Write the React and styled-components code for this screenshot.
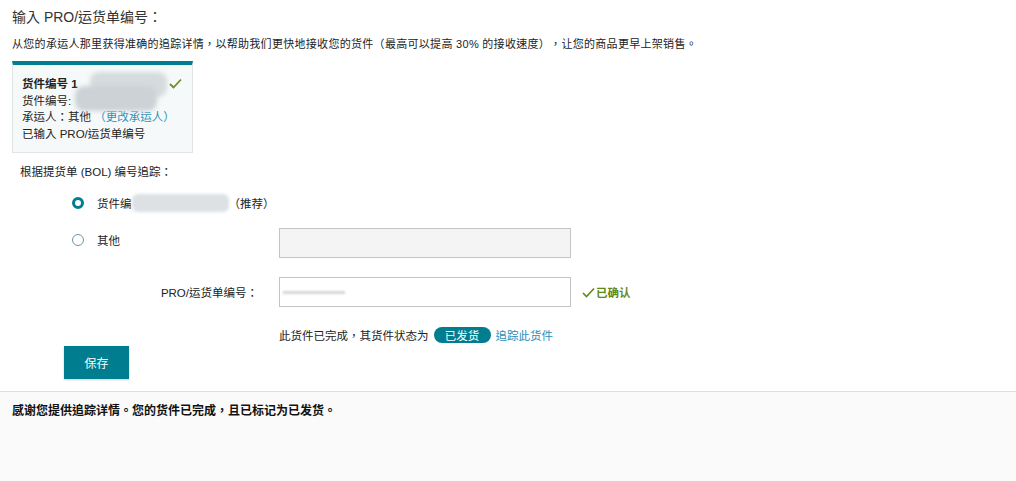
import React from 'react';
import styled, { createGlobalStyle } from 'styled-components';

const GlobalStyle = createGlobalStyle`
  body {
    margin: 0;
    background: #fff;
    font-family: "Liberation Sans", "Noto Sans CJK TC", sans-serif;
    color: #333;
    text-spacing-trim: space-all;
  }
`;

const teal = '#007e8f';

function App() {
    const [choice, setChoice] = React.useState('shipment');

    return (
        <Page>
            <GlobalStyle />
            <Main>
                <Title>输入 PRO/运货单编号：</Title>
                <Desc>
                    从您的承运人那里获得准确的追踪详情，以帮助我们更快地接收您的货件（最高可以提高 30% 的接收速度），让您的商品更早上架销售。
                </Desc>
                <Card>
                    <CardTitle>货件编号 1</CardTitle>
                    <div>货件编号: </div>
                    <div>
                        承运人：其他 <Link>（更改承运人）</Link>
                    </div>
                    <div>已输入 PRO/运货单编号</div>
                    <CardBlurTop />
                    <CardBlurBottom />
                    <Check>
                        <svg width='13' height='11' viewBox='0 0 13 11'>
                            <path d='M1 6 L4.5 9.5 L12 1.5' fill='none' stroke='#6b8e23' strokeWidth='1.8' />
                        </svg>
                    </Check>
                </Card>
                <BolLabel>根据提货单 (BOL) 编号追踪：</BolLabel>
                <FormGrid>
                    <OptionRow $wide>
                        <Radio $checked={choice === 'shipment'} onClick={() => setChoice('shipment')} />
                        <OptionText>
                            货件编
                            <InlineBlur />
                            （推荐）
                        </OptionText>
                    </OptionRow>

                    <OptionRow>
                        <Radio $checked={choice === 'other'} onClick={() => setChoice('other')} />
                        <OptionText>其他</OptionText>
                    </OptionRow>
                    <Field disabled />
                    <span />

                    <FieldLabel>PRO/运货单编号：</FieldLabel>
                    <FieldWrap>
                        <Field />
                        <FieldSmudge />
                    </FieldWrap>
                    <Confirmed>
                        <svg width='13' height='11' viewBox='0 0 13 11'>
                            <path d='M1 6 L4.5 9.5 L12 1.5' fill='none' stroke='#5f8a1a' strokeWidth='1.6' />
                        </svg>
                        已确认
                    </Confirmed>

                    <span />
                    <Status>
                        此货件已完成，其货件状态为
                        <Pill>已发货</Pill>
                        <Link>追踪此货件</Link>
                    </Status>
                </FormGrid>
                <SaveButton>保存</SaveButton>
            </Main>
            <Footer>感谢您提供追踪详情。您的货件已完成，且已标记为已发货。</Footer>
        </Page>
    );
}

const Page = styled.div`
  width: 1016px;
  height: 481px;
  display: flex;
  flex-direction: column;
  overflow: hidden;
`;

const Main = styled.div`
  padding: 7px 0 12px 12px;
  border-bottom: 1px solid #dedede;
`;

const Title = styled.h1`
  margin: 0;
  font-size: 14px;
  font-weight: normal;
  line-height: 20px;
  color: #333;
`;

const Desc = styled.p`
  margin: 9px 0 0;
  font-size: 11px;
  line-height: 16px;
  letter-spacing: 0.3px;
  color: #222;
`;

const Card = styled.div`
  position: relative;
  box-sizing: border-box;
  width: 181px;
  margin-top: 9px;
  padding: 11px 10px 10px 9px;
  background: #f6f9fa;
  border: 1px solid #e1e5e7;
  border-top: 4px solid ${teal};
  font-size: 11.5px;
  line-height: 16.5px;
  color: #222;
`;

const CardTitle = styled.div`
  font-weight: bold;
`;

const Blur = styled.div`
  position: absolute;
  filter: blur(2px);
  border-radius: 9px;
`;

const CardBlurTop = styled(Blur)`
  left: 77px;
  top: 7px;
  width: 77px;
  height: 25px;
  background: #d6dbde;
`;

const CardBlurBottom = styled(Blur)`
  left: 62px;
  top: 21px;
  width: 82px;
  height: 25px;
  background: #ccd2d5;
`;

const Check = styled.span`
  position: absolute;
  right: 10px;
  top: 12px;
`;

const Link = styled.span`
  color: #2a8fb5;
  cursor: pointer;
`;

const BolLabel = styled.div`
  margin: 11px 0 0 8px;
  font-size: 11.5px;
  line-height: 16px;
  color: #222;
`;

const FormGrid = styled.div`
  display: grid;
  grid-template-columns: 279px 292px auto;
  row-gap: 19px;
  align-items: center;
  margin-top: 13px;
  margin-left: -12px;
  font-size: 11.5px;
  color: #222;
`;

const OptionRow = styled.label`
  grid-column: ${(p) => (p.$wide ? '1 / 4' : 'auto')};
  display: flex;
  align-items: center;
  gap: 13px;
  height: 20px;
  padding-left: 72px;
  margin-bottom: ${(p) => (p.$wide ? '-4px' : '6px')};
  cursor: pointer;
`;

const OptionText = styled.span`
  display: flex;
  align-items: center;
`;

const Radio = styled.span`
  box-sizing: border-box;
  width: 12px;
  height: 12px;
  border-radius: 50%;
  flex: none;
  background: #fff;
  border: ${(p) => (p.$checked ? `3.5px solid ${teal}` : '1px solid #6c97a8')};
`;

const InlineBlur = styled.span`
  display: inline-block;
  width: 97px;
  height: 18px;
  background: #dde1e4;
  filter: blur(1.5px);
  border-radius: 6px;
`;

const Field = styled.input.attrs({ type: 'text' })`
  box-sizing: border-box;
  width: 292px;
  height: 30px;
  margin: 0;
  border: 1px solid #c4c4c4;
  background: ${(p) => (p.disabled ? '#f4f4f4' : '#fff')};
  font-family: inherit;
  outline: none;
`;

const FieldWrap = styled.div`
  position: relative;
  height: 30px;
`;

const FieldSmudge = styled.span`
  position: absolute;
  left: 4px;
  top: 14px;
  width: 62px;
  height: 3px;
  background: #d6d6d6;
  filter: blur(1px);
`;

const FieldLabel = styled.div`
  text-align: right;
  padding-right: 21px;
  color: #222;
`;

const Confirmed = styled.div`
  display: flex;
  align-items: center;
  gap: 1px;
  padding-left: 11px;
  font-weight: bold;
  color: #5f8a1a;
`;

const Status = styled.div`
  grid-column: 2 / 4;
  display: flex;
  align-items: center;
  height: 18px;
`;

const Pill = styled.span`
  display: inline-flex;
  align-items: center;
  justify-content: center;
  width: 57px;
  height: 16px;
  margin: 0 5px;
  border-radius: 8px;
  background: ${teal};
  color: #fff;
`;

const SaveButton = styled.button`
  display: block;
  width: 65px;
  height: 33px;
  margin: 2px 0 0 52px;
  border: none;
  background: ${teal};
  color: #fff;
  font-family: inherit;
  font-size: 12px;
  box-shadow: 0 1px 2px rgba(0, 0, 0, 0.2);
  cursor: pointer;
`;

const Footer = styled.div`
  flex: 1;
  background: #fafafa;
  padding: 11px 12px 0;
  font-size: 12px;
  line-height: 16px;
  font-weight: bold;
  color: #111;
`;

export default App;
